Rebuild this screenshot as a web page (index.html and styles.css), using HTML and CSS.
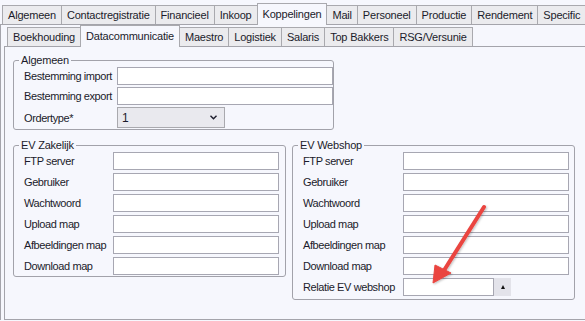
FILE: index.html
```html
<!DOCTYPE html>
<html lang="nl">

<head>
    <meta charset="UTF-8" />
    <title>Koppelingen - Datacommunicatie</title>
    <link rel="stylesheet" href="styles.css">
</head>

<body>
    <div class="tabs tabs-top">
        <span class="tab">Algemeen</span>
        <span class="tab">Contactregistratie</span>
        <span class="tab">Financieel</span>
        <span class="tab">Inkoop</span>
        <span class="tab active">Koppelingen</span>
        <span class="tab">Mail</span>
        <span class="tab">Personeel</span>
        <span class="tab">Productie</span>
        <span class="tab">Rendement</span>
        <span class="tab">Specific</span>
    </div>

    <div class="page page-outer">
        <div class="tabs tabs-sub">
            <span class="tab">Boekhouding</span>
            <span class="tab active">Datacommunicatie</span>
            <span class="tab">Maestro</span>
            <span class="tab">Logistiek</span>
            <span class="tab">Salaris</span>
            <span class="tab">Top Bakkers</span>
            <span class="tab">RSG/Versunie</span>
        </div>

        <div class="page page-inner">
            <fieldset class="group group-algemeen">
                <legend>Algemeen</legend>
                <div class="rows">
                    <label>Bestemming import</label>
                    <span class="field"></span>
                    <label>Bestemming export</label>
                    <span class="field"></span>
                    <label>Ordertype*</label>
                    <span class="select">
                        <span>1</span>
                        <svg width="7" height="5" viewBox="0 0 7 5"><polyline points="0.5,0.8 3.5,3.8 6.5,0.8" fill="none" stroke="#1b1b2b" stroke-width="1.4" /></svg>
                    </span>
                </div>
            </fieldset>

            <div class="groups">
                <fieldset class="group group-zakelijk">
                    <legend>EV Zakelijk</legend>
                    <div class="rows">
                        <label>FTP server</label>
                        <span class="field"></span>
                        <label>Gebruiker</label>
                        <span class="field"></span>
                        <label>Wachtwoord</label>
                        <span class="field"></span>
                        <label>Upload map</label>
                        <span class="field"></span>
                        <label>Afbeeldingen map</label>
                        <span class="field"></span>
                        <label>Download map</label>
                        <span class="field"></span>
                    </div>
                </fieldset>

                <fieldset class="group group-webshop">
                    <legend>EV Webshop</legend>
                    <div class="rows">
                        <label>FTP server</label>
                        <span class="field"></span>
                        <label>Gebruiker</label>
                        <span class="field"></span>
                        <label>Wachtwoord</label>
                        <span class="field"></span>
                        <label>Upload map</label>
                        <span class="field"></span>
                        <label>Afbeeldingen map</label>
                        <span class="field"></span>
                        <label>Download map</label>
                        <span class="field"></span>
                        <label>Relatie EV webshop</label>
                        <span class="lookup">
                            <span class="field"></span>
                            <span class="lookup-btn"><span class="up"></span></span>
                        </span>
                    </div>
                </fieldset>
            </div>
        </div>
    </div>

    <!-- annotation arrow -->
    <svg class="arrow" width="70" height="90" viewBox="0 0 70 90">
        <defs>
            <filter id="shadow" x="-20%" y="-20%" width="140%" height="140%">
                <feDropShadow dx="1" dy="1" stdDeviation="1" flood-color="#000" flood-opacity="0.25" />
            </filter>
        </defs>
        <g filter="url(#shadow)" fill="#ea4540" stroke="#ea4540">
            <line x1="59" y1="7" x2="18" y2="72" stroke-width="4" stroke-linecap="round" />
            <polygon points="8,83 10,65 26,73" stroke-width="1" stroke-linejoin="round" />
        </g>
    </svg>
</body>

</html>
```

FILE: styles.css
```css
body {
    margin: 0;
    background: #f6f7fd;
    font-family: "Liberation Sans", Arial, sans-serif;
    font-size: 11px;
    letter-spacing: -0.2px;
    color: #1b1b2b;
    overflow: hidden;
    height: 321px;
    position: relative;
}

.tabs {
    display: flex;
    align-items: flex-end;
    white-space: nowrap;
}

.tabs-top {
    height: 24px;
    padding-left: 2px;
}

.tabs-sub {
    height: 21px;
    padding-left: 3px;
}

.tab {
    height: 18px;
    line-height: 18px;
    padding: 0 5px;
    background: #ebebee;
    border: 1px solid #a9a9ae;
    border-bottom: none;
    margin-right: -1px;
}

.tab.active {
    height: 21px;
    line-height: 20px;
    background: #f6f7fd;
    margin-bottom: -1px;
    position: relative;
    z-index: 1;
}

.page {
    border-top: 1px solid #a4a4ab;
    border-left: 1px solid #a4a4ab;
}

.page-outer {
    padding-left: 3px;
}

.page-inner {
    height: 272px;
    border-bottom: 1px solid #a4a4ab;
    padding-left: 8px;
}

.group {
    margin: 7px 0 0;
    padding: 0;
    border: 1px solid #a2a2aa;
    border-radius: 3px;
    min-inline-size: 0;
    box-sizing: border-box;
}

.group legend {
    margin-left: 5px;
    padding: 0 2px;
    line-height: 13px;
}

.rows {
    display: grid;
    row-gap: 3px;
    align-items: center;
    padding: 0 0 2px 10px;
}

.group-algemeen {
    width: 321px;
}

.group-algemeen .rows {
    grid-template-columns: 93px 216px;
    row-gap: 2px;
    padding-bottom: 1px;
}

.groups {
    display: flex;
    align-items: flex-start;
    gap: 6px;
    margin-top: 9px;
}

.groups .group {
    margin-top: 0;
}

.group-zakelijk {
    width: 273px;
}

.group-zakelijk .rows {
    grid-template-columns: 89px 166px;
    padding-bottom: 1px;
}

.group-webshop {
    width: 283px;
}

.group-webshop .rows {
    grid-template-columns: 100px 166px;
    padding-bottom: 3px;
}

label {
    white-space: nowrap;
    letter-spacing: -0.4px;
}

.field {
    display: block;
    height: 16px;
    background: #fff;
    border: 1px solid #a7a7b2;
}

.select {
    display: flex;
    align-items: center;
    justify-content: space-between;
    width: 108px;
    height: 21px;
    box-sizing: border-box;
    padding: 0 7px 0 4px;
    background: #e9e9ee;
    border: 1px solid #a9a9ae;
    font-size: 12px;
}

.lookup {
    display: flex;
}

.lookup .field {
    width: 89px;
}

.lookup-btn {
    width: 17px;
    height: 18px;
    background: #e3e3ea;
    display: flex;
    align-items: center;
    justify-content: center;
}

.up {
    width: 0;
    height: 0;
    border-left: 2.5px solid transparent;
    border-right: 2.5px solid transparent;
    border-bottom: 4px solid #111;
}

.arrow {
    position: absolute;
    left: 425px;
    top: 200px;
}
```
